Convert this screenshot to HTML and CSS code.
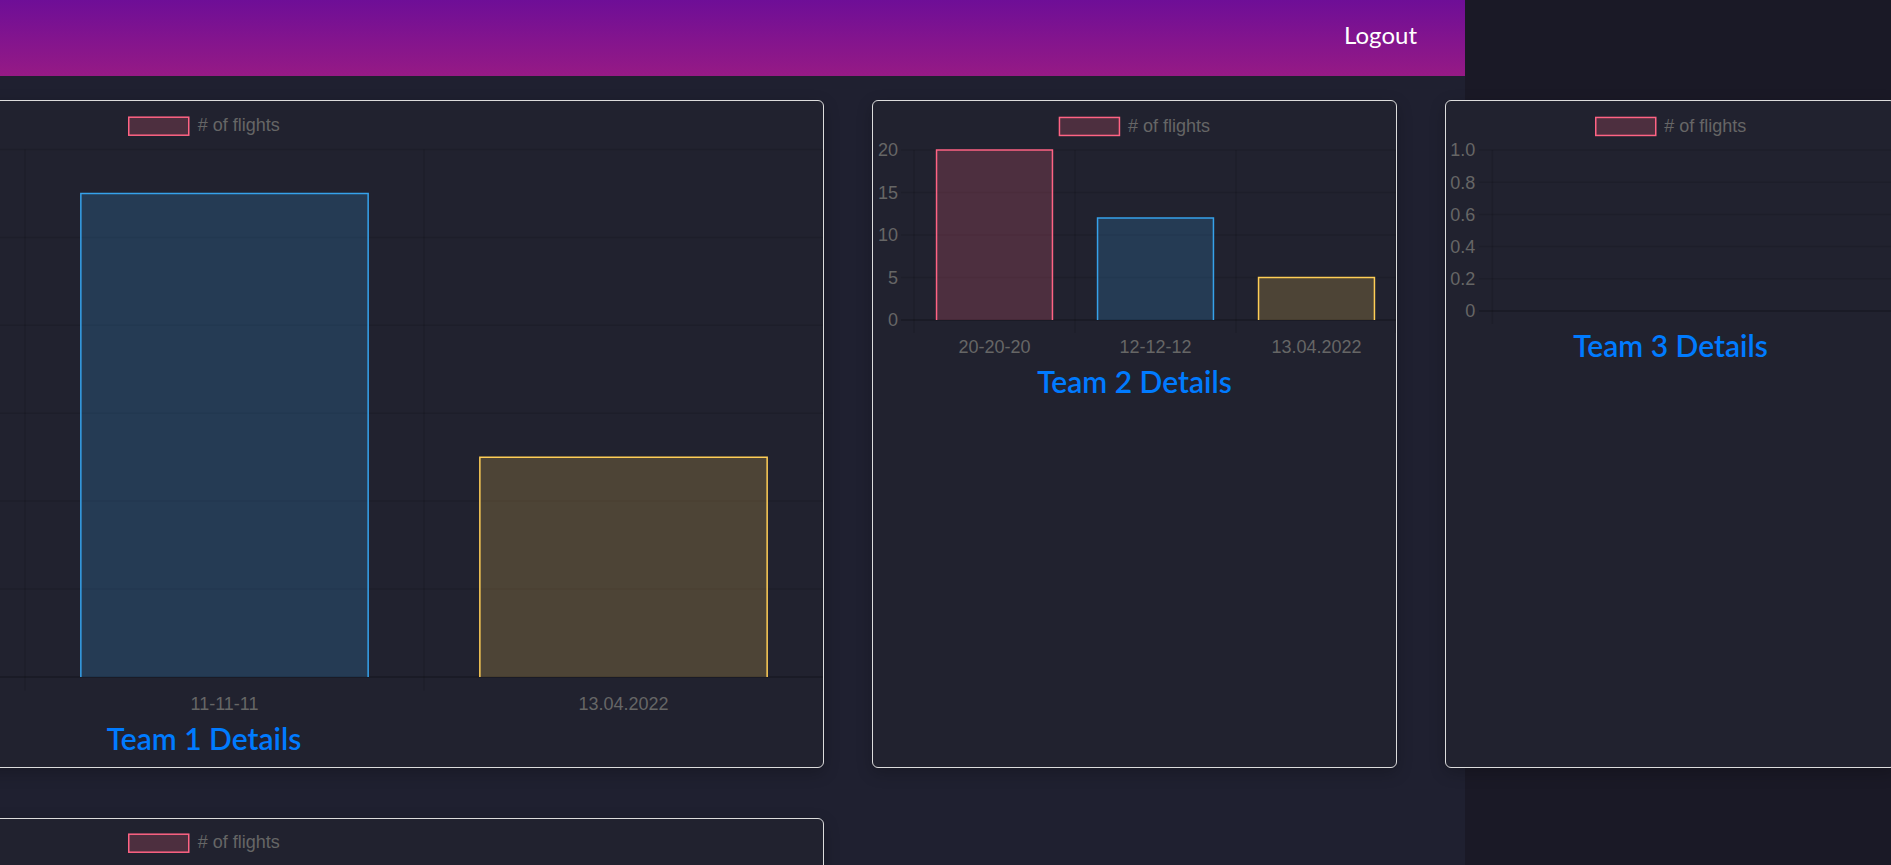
FILE: index.html
```html
<!DOCTYPE html>
<html lang="en">
<head>
<meta charset="utf-8">
<title>Teams</title>
<link rel="stylesheet" href="styles.css">
</head>
<body>
<div class="page">
  <header class="topbar">
    <a class="logout" href="#">Logout</a>
  </header>
  <main class="content">
    <div class="row">
      <div class="card card-wide">
        <svg class="chart" width="1238" height="619" viewBox="0 0 1238 619">
          <g class="grid">
            <line x1="28" y1="48.5" x2="1238" y2="48.5"/>
            <line x1="28" y1="136.4" x2="1238" y2="136.4"/>
            <line x1="28" y1="224.3" x2="1238" y2="224.3"/>
            <line x1="28" y1="312.2" x2="1238" y2="312.2"/>
            <line x1="28" y1="400.1" x2="1238" y2="400.1"/>
            <line x1="28" y1="488" x2="1238" y2="488"/>
            <line x1="41" y1="48.5" x2="41" y2="589.5"/>
            <line x1="440" y1="48.5" x2="440" y2="589.5"/>
            <line x1="839" y1="48.5" x2="839" y2="589.5"/>
            <line x1="1237.5" y1="48.5" x2="1237.5" y2="589.5"/>
          </g>
          <line class="zero" x1="28" y1="576" x2="1238" y2="576"/>
          <g class="legend">
            <rect class="pink" x="543.75" y="16.2" width="60" height="18"/>
            <text x="612.7" y="30.2">&#35; of flights</text>
          </g>
          <rect class="pink" x="96.85" y="268.3" width="287.3" height="307.7"/>
          <path class="pink-edge" d="M96.85 576 V268.3 H384.15 V576"/>
          <rect class="blue" x="495.85" y="92.5" width="287.3" height="483.5"/>
          <path class="blue-edge" d="M495.85 576 V92.5 H783.15 V576"/>
          <rect class="yellow" x="894.85" y="356.2" width="287.3" height="219.8"/>
          <path class="yellow-edge" d="M894.85 576 V356.2 H1182.15 V576"/>
          <g class="xticks">
            <text x="639.5" y="609.3">11-11-11</text>
            <text x="1038.5" y="609.3">13.04.2022</text>
          </g>
        </svg>
        <h5 class="title"><a href="#">Team 1 Details</a></h5>
      </div>

      <div class="card card-mid">
        <svg class="chart" width="523" height="262" viewBox="0 0 523 262">
          <g class="grid">
            <line x1="28" y1="49" x2="523" y2="49"/>
            <line x1="28" y1="91.5" x2="523" y2="91.5"/>
            <line x1="28" y1="134" x2="523" y2="134"/>
            <line x1="28" y1="176.5" x2="523" y2="176.5"/>
            <line x1="41" y1="49" x2="41" y2="232"/>
            <line x1="202" y1="49" x2="202" y2="232"/>
            <line x1="363" y1="49" x2="363" y2="232"/>
            <line x1="522.5" y1="49" x2="522.5" y2="232"/>
          </g>
          <line class="zero" x1="28" y1="219" x2="523" y2="219"/>
          <g class="legend">
            <rect class="pink" x="186.45" y="16.45" width="60" height="18"/>
            <text x="255" y="30.5">&#35; of flights</text>
          </g>
          <g class="yticks">
            <text x="25" y="55.3">20</text>
            <text x="25" y="97.8">15</text>
            <text x="25" y="140.3">10</text>
            <text x="25" y="182.8">5</text>
            <text x="25" y="225.3">0</text>
          </g>
          <rect class="pink" x="63.55" y="49" width="115.9" height="170"/>
          <path class="pink-edge" d="M63.55 219 V49 H179.45 V219"/>
          <rect class="blue" x="224.55" y="117" width="115.9" height="102"/>
          <path class="blue-edge" d="M224.55 219 V117 H340.45 V219"/>
          <rect class="yellow" x="385.55" y="176.5" width="115.9" height="42.5"/>
          <path class="yellow-edge" d="M385.55 219 V176.5 H501.45 V219"/>
          <g class="xticks">
            <text x="121.5" y="252.3">20-20-20</text>
            <text x="282.5" y="252.3">12-12-12</text>
            <text x="443.5" y="252.3">13.04.2022</text>
          </g>
        </svg>
        <h5 class="title"><a href="#">Team 2 Details</a></h5>
      </div>

      <div class="card card-narrow">
        <svg class="chart" width="449" height="226" viewBox="0 0 449 226">
          <g class="grid">
            <line x1="33" y1="49" x2="449" y2="49"/>
            <line x1="33" y1="81.2" x2="449" y2="81.2"/>
            <line x1="33" y1="113.4" x2="449" y2="113.4"/>
            <line x1="33" y1="145.6" x2="449" y2="145.6"/>
            <line x1="33" y1="177.8" x2="449" y2="177.8"/>
            <line x1="46.3" y1="49" x2="46.3" y2="223"/>
          </g>
          <line class="zero" x1="33" y1="210" x2="449" y2="210"/>
          <g class="legend">
            <rect class="pink" x="149.75" y="16.45" width="60" height="18"/>
            <text x="218.3" y="30.5">&#35; of flights</text>
          </g>
          <g class="yticks">
            <text x="29.3" y="55.3">1.0</text>
            <text x="29.3" y="87.5">0.8</text>
            <text x="29.3" y="119.7">0.6</text>
            <text x="29.3" y="151.9">0.4</text>
            <text x="29.3" y="184.1">0.2</text>
            <text x="29.3" y="216.3">0</text>
          </g>
        </svg>
        <h5 class="title"><a href="#">Team 3 Details</a></h5>
      </div>
    </div>

    <div class="row">
      <div class="card card-wide">
        <svg class="chart" width="1238" height="619" viewBox="0 0 1238 619">
          <g class="grid">
            <line x1="28" y1="48.5" x2="1238" y2="48.5"/>
            <line x1="28" y1="136.4" x2="1238" y2="136.4"/>
            <line x1="28" y1="224.3" x2="1238" y2="224.3"/>
            <line x1="41" y1="48.5" x2="41" y2="589.5"/>
            <line x1="1237.5" y1="48.5" x2="1237.5" y2="589.5"/>
          </g>
          <g class="legend">
            <rect class="pink" x="543.75" y="15.2" width="60" height="18"/>
            <text x="612.7" y="29.2">&#35; of flights</text>
          </g>
        </svg>
      </div>
    </div>
  </main>
</div>
</body>
</html>
```

FILE: styles.css
```css
html {
  background: #1a1926;
  overflow: hidden;
}

body {
  margin: 0;
  overflow: hidden;
  font-family: "Liberation Sans", Arial, sans-serif;
}

.page {
  width: 1891px;
  margin-left: -426px;
  min-height: 865px;
  background: #1f2030;
}

.topbar {
  height: 76px;
  box-sizing: border-box;
  padding: 17px 48px 0 0;
  display: flex;
  justify-content: flex-end;
  align-items: flex-start;
  background: linear-gradient(180deg, #6e0e97 0%, #961a85 100%);
}

.logout {
  display: block;
  color: #ffffff;
  text-decoration: none;
  font-family: "Segoe UI", Lato, "Noto Sans", sans-serif;
  font-size: 24px;
  line-height: 36px;
}

.content {
  padding: 24px 0 0 10px;
}

.row {
  display: flex;
  align-items: stretch;
  gap: 48px;
  margin-bottom: 50px;
}

.card {
  flex: none;
  box-sizing: border-box;
  background: #21222f;
  border: 1px solid #dcdcdc;
  border-radius: 6px;
  padding-bottom: 11px;
  box-shadow: 0 5px 16px rgba(0, 0, 0, 0.22);
}

.card-wide { width: 1240px; }
.card-mid { width: 525px; }
.card-narrow { width: 451px; }

.chart {
  display: block;
}

.grid line {
  stroke: rgba(0, 0, 0, 0.1);
  stroke-width: 1.5;
}

.zero {
  stroke: rgba(0, 0, 0, 0.25);
  stroke-width: 1.5;
}

.legend text,
.yticks text,
.xticks text {
  font-family: "Liberation Sans", Arial, sans-serif;
  font-size: 18px;
  fill: #666666;
}

.yticks text { text-anchor: end; }
.xticks text { text-anchor: middle; }

.pink { fill: rgba(255, 99, 132, 0.2); }
.blue { fill: rgba(54, 162, 235, 0.2); }
.yellow { fill: rgba(255, 206, 86, 0.2); }

.legend .pink {
  stroke: rgb(255, 99, 132);
  stroke-width: 1.5;
}

.pink-edge, .blue-edge, .yellow-edge {
  fill: none;
  stroke-width: 1.5;
}
.pink-edge { stroke: rgb(255, 99, 132); }
.blue-edge { stroke: rgb(54, 162, 235); }
.yellow-edge { stroke: rgb(255, 206, 86); }

.title {
  margin: 0;
  text-align: center;
  font-family: "Segoe UI", Lato, "Noto Sans", sans-serif;
  font-weight: 600;
  font-size: 30px;
  line-height: 36px;
}

.title a {
  color: #007bff;
  text-decoration: none;
}
```
